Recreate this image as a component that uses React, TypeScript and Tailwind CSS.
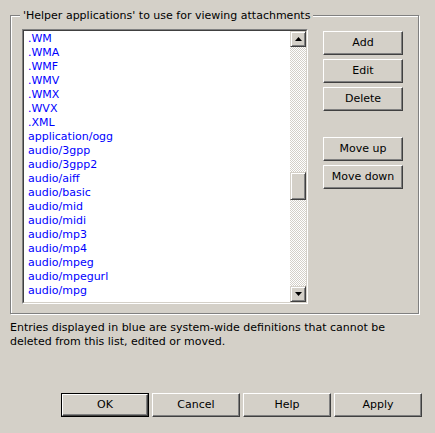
const items = [
  ".WM",
  ".WMA",
  ".WMF",
  ".WMV",
  ".WMX",
  ".WVX",
  ".XML",
  "application/ogg",
  "audio/3gpp",
  "audio/3gpp2",
  "audio/aiff",
  "audio/basic",
  "audio/mid",
  "audio/midi",
  "audio/mp3",
  "audio/mp4",
  "audio/mpeg",
  "audio/mpegurl",
  "audio/mpg",
];

function Button({
  label,
  width,
  isDefault,
}: {
  label: string;
  width: string;
  isDefault?: boolean;
}) {
  const face = (
    <div className="flex h-full w-full items-center justify-center border border-t-white border-l-white border-b-[#404040] border-r-[#404040] bg-[#d4d0c8] shadow-[inset_-1px_-1px_0_#808080] text-black">
      {label}
    </div>
  );
  return (
    <button className={`${width} h-[24px] p-0 ${isDefault ? "border border-black" : ""}`}>
      {face}
    </button>
  );
}

function Arrow({ down }: { down?: boolean }) {
  return (
    <svg width="7" height="4" viewBox="0 0 7 4" className="block">
      {down ? (
        <polygon points="0,0 7,0 3.5,4" fill="black" />
      ) : (
        <polygon points="3.5,0 7,4 0,4" fill="black" />
      )}
    </svg>
  );
}

function ScrollButton({ down }: { down?: boolean }) {
  return (
    <div className="flex h-[16px] w-[16px] items-center justify-center border border-t-[#d4d0c8] border-l-[#d4d0c8] border-b-[#404040] border-r-[#404040] bg-[#d4d0c8] shadow-[inset_1px_1px_0_#ffffff,inset_-1px_-1px_0_#808080]">
      <Arrow down={down} />
    </div>
  );
}

export default function App() {
  return (
    <div className="flex h-[433px] w-[435px] flex-col bg-[#d4d0c8] font-['DejaVu_Sans',sans-serif] text-[11px] text-black">
      <div className="ml-[10px] mt-[15px] flex h-[299px] w-[409px] flex-col border border-[#808080] shadow-[1px_1px_0_#ffffff,inset_1px_1px_0_#ffffff]">
        <span className="ml-[9px] -mt-[7px] self-start bg-[#d4d0c8] px-[3px] leading-[14px]">
          'Helper applications' to use for viewing attachments
        </span>
        <div className="ml-[11px] mt-[6px] flex gap-[15px]">
          <div className="flex h-[275px] w-[286px] border border-t-[#808080] border-l-[#808080] border-b-white border-r-white">
            <div className="flex h-full w-full border border-t-[#404040] border-l-[#404040] border-b-[#d4d0c8] border-r-[#d4d0c8] bg-white">
              <ul className="flex-1 overflow-hidden pl-[4px] pt-[1px]">
                {items.map((item) => (
                  <li key={item} className="h-[14px] leading-[14px] text-[#0000ff]">
                    {item}
                  </li>
                ))}
              </ul>
              <div className="flex w-[16px] flex-col">
                <ScrollButton />
                <div className="flex flex-1 flex-col bg-[repeating-conic-gradient(#d4d0c8_0%_25%,#ffffff_0%_50%)] bg-[length:2px_2px]">
                  <div className="h-[125px]" />
                  <div className="h-[28px] w-[16px] border border-t-[#d4d0c8] border-l-[#d4d0c8] border-b-[#404040] border-r-[#404040] bg-[#d4d0c8] shadow-[inset_1px_1px_0_#ffffff,inset_-1px_-1px_0_#808080]" />
                </div>
                <ScrollButton down />
              </div>
            </div>
          </div>
          <div className="mt-[2px] flex flex-col">
            <div className="flex flex-col gap-[4px]">
              <Button label="Add" width="w-[80px]" />
              <Button label="Edit" width="w-[80px]" />
              <Button label="Delete" width="w-[80px]" />
            </div>
            <div className="mt-[26px] flex flex-col gap-[4px]">
              <Button label="Move up" width="w-[80px]" />
              <Button label="Move down" width="w-[80px]" />
            </div>
          </div>
        </div>
      </div>
      <p className="ml-[10px] mt-[7px] leading-[14px]">
        Entries displayed in blue are system-wide definitions that cannot be
        <br />
        deleted from this list, edited or moved.
      </p>
      <div className="mt-auto flex justify-end gap-[3px] pb-[16px] pr-[13px]">
        <Button label="OK" width="w-[88px]" isDefault />
        <Button label="Cancel" width="w-[88px]" />
        <Button label="Help" width="w-[88px]" />
        <Button label="Apply" width="w-[88px]" />
      </div>
    </div>
  );
}
